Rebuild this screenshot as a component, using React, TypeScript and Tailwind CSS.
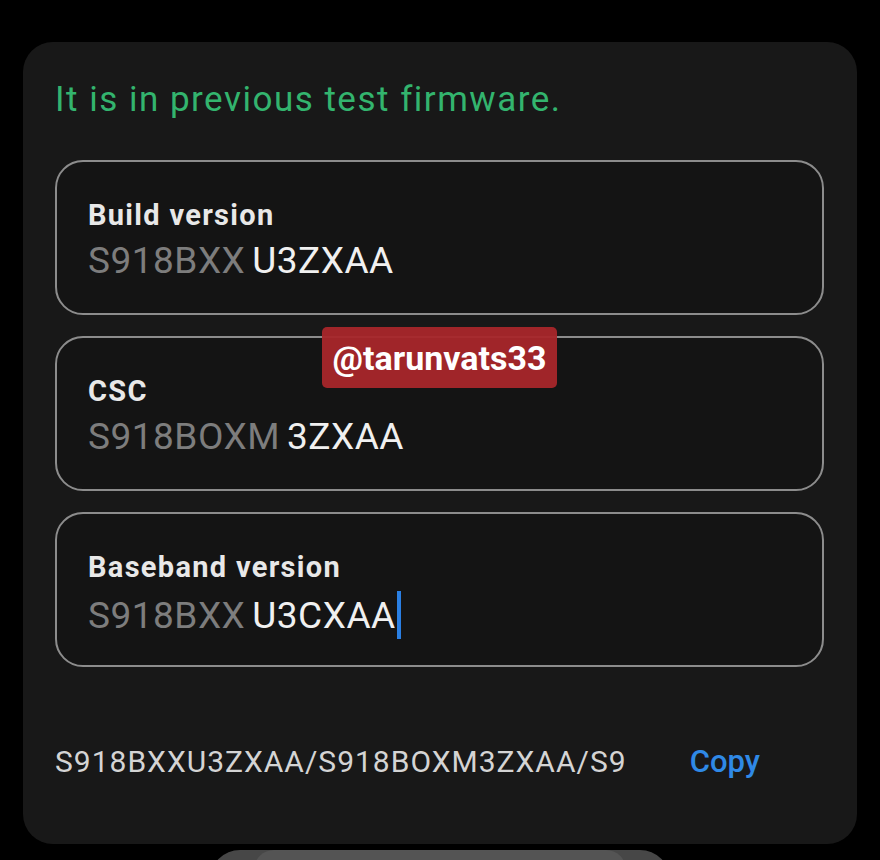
import React from "react";

const font = { fontFamily: "Roboto, 'Noto Sans', Arial, sans-serif" };

function Field({
  label,
  prefix,
  suffix,
  cursor,
}: {
  label: string;
  prefix: string;
  suffix: string;
  cursor?: boolean;
}) {
  return (
    <div className="h-[155px] rounded-[28px] border-2 border-[#8c8c8c] bg-[#141414] pl-[31px] pt-[36px]">
      <div className="text-[29px] font-bold leading-[34px] tracking-[1.3px] text-[#e8e8e8]">{label}</div>
      <div className="mt-[7px] flex items-center text-[37px] leading-[43px] tracking-[0.5px]">
        <span className="text-[#7d7d7d]">{prefix}</span>
        <span className="ml-[7px] text-[#f0f0f0]">{suffix}</span>
        {cursor && <span className="ml-[1px] h-[48px] w-[4px] bg-[#2a7fe3]" />}
      </div>
    </div>
  );
}

export default function App() {
  return (
    <div className="h-[860px] w-[880px] overflow-hidden bg-black" style={font}>
      <div className="relative ml-[23px] mt-[42px] h-[802px] w-[834px] rounded-[30px] bg-[#181818] pl-[32px] pr-[33px] pt-[38px]">
        <div className="text-[35px] leading-[40px] tracking-[1.5px] text-[#33b46e]">
          It is in previous test firmware.
        </div>
        <div className="mt-[40px] flex flex-col gap-[21px]">
          <Field label="Build version" prefix="S918BXX" suffix="U3ZXAA" />
          <Field label="CSC" prefix="S918BOXM" suffix="3ZXAA" />
          <Field label="Baseband version" prefix="S918BXX" suffix="U3CXAA" cursor />
        </div>
        <div className="mt-[77px] flex items-center justify-between">
          <span className="text-[30px] leading-[36px] tracking-[1px] text-[#d4d4d4]">
            S918BXXU3ZXAA/S918BOXM3ZXAA/S9
          </span>
          <span className="mr-[64px] text-[31px] font-medium leading-[36px] text-[#2f89e6]">
            Copy
          </span>
        </div>
        <div className="absolute left-[299px] top-[285px] flex h-[61px] w-[235px] items-center justify-center rounded-[5px] bg-[#a8262a]/95">
          <span className="text-[34px] font-bold leading-[40px] text-white">@tarunvats33</span>
        </div>
      </div>
      <div className="mx-auto mt-[6px] flex h-[30px] w-[460px] justify-center rounded-t-[30px] bg-[#474747]">
        <div className="h-full w-[372px] rounded-t-[20px] bg-[#545454]" />
      </div>
    </div>
  );
}
